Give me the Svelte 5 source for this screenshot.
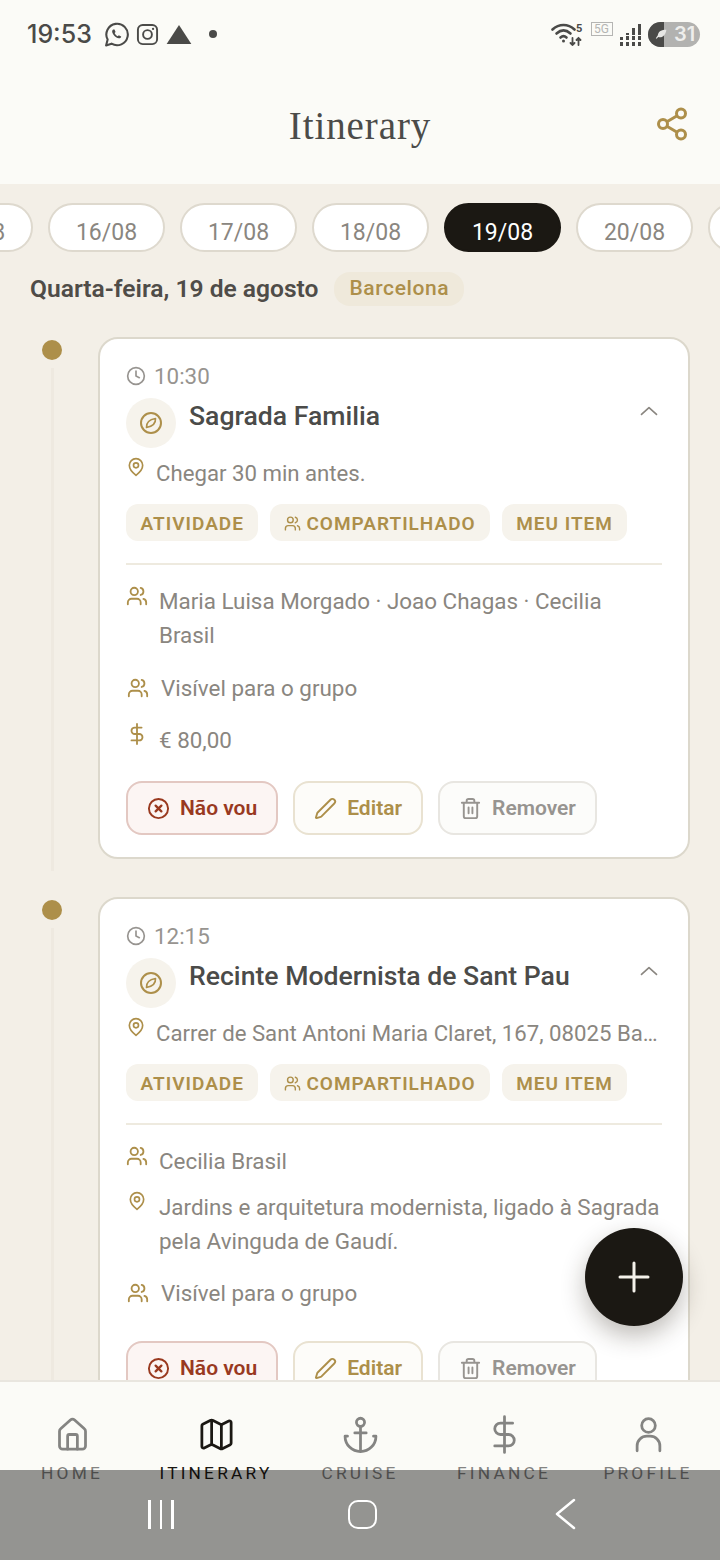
<script>
  const dates = ['15/08', '16/08', '17/08', '18/08', '19/08', '20/08', '21/08']
  const activeDate = '19/08'

  const events = [
    {
      time: '10:30',
      title: 'Sagrada Familia',
      place: 'Chegar 30 min antes.',
      people: 'Maria Luisa Morgado · Joao Chagas · Cecilia Brasil',
      price: '€ 80,00'
    },
    {
      time: '12:15',
      title: 'Recinte Modernista de Sant Pau',
      place: 'Carrer de Sant Antoni Maria Claret, 167, 08025 Barcelona',
      people: 'Cecilia Brasil',
      note: 'Jardins e arquitetura modernista, ligado à Sagrada pela Avinguda de Gaudí.'
    }
  ]

  const tabs = ['HOME', 'ITINERARY', 'CRUISE', 'FINANCE', 'PROFILE']
</script>

{#snippet users()}
  <path d="M16 21v-2a4 4 0 0 0-4-4H6a4 4 0 0 0-4 4v2" />
  <circle cx="9" cy="7" r="4" />
  <path d="M22 21v-2a4 4 0 0 0-3-3.87" />
  <path d="M16 3.13a4 4 0 0 1 0 7.75" />
{/snippet}

{#snippet pin()}
  <path d="M20 10c0 6-8 12-8 12s-8-6-8-12a8 8 0 0 1 16 0Z" />
  <circle cx="12" cy="10" r="3" />
{/snippet}

<div class="screen">
  <header class="top">
    <div class="status">
      <div class="status-left">
        <span class="clock">19:53</span>
        <svg class="st-wa" viewBox="0 0 24 24" fill="none" stroke="currentColor" stroke-width="2">
          <path d="M2 22.5l1.5-5.6A10.3 10.3 0 1 1 7.2 20.8z" stroke-linejoin="round" />
          <path d="M8.7 7.3c-1.3 1-1.2 2.9.4 5 1.6 2.1 3.5 3.4 5.4 3.3 1.1-.1 2-.9 2-1.8l-2.3-1.2-1 1c-1.200-.4-2.500-1.700-3-3l.9-1-1-2.400z" fill="currentColor" stroke="none" />
        </svg>
        <svg class="st-ig" viewBox="0 0 24 24" fill="none" stroke="currentColor" stroke-width="2">
          <rect x="2" y="2" width="20" height="20" rx="5" />
          <circle cx="12" cy="12" r="4.600" />
          <circle cx="17.800" cy="6.200" r="1.200" fill="currentColor" stroke="none" />
        </svg>
        <svg class="st-tri" viewBox="0 0 26 20"><path d="M13 0l13 20H0z" fill="currentColor" /></svg>
        <span class="st-dot"></span>
      </div>
      <div class="status-right">
        <svg class="st-wifi" viewBox="0 0 32 24" fill="none" stroke="currentColor" stroke-width="2.600" stroke-linecap="round">
          <path d="M1.500 7.500C8 1.500 17 1.500 23.500 7.500" />
          <path d="M5.500 11.500C10 7.500 15 7.500 19.500 11.500" />
          <path d="M9.500 15.500c2-1.800 4-1.800 6 0" />
          <circle cx="12.500" cy="19" r="1.500" fill="currentColor" stroke="none" />
          <path d="M21.500 16v7M19.500 21l2 2 2-2M27.500 23v-7M25.500 18l2-2 2 2" stroke-width="1.800" />
          <text x="25" y="9.500" class="st-five">5</text>
        </svg>
        <span class="st-5g">5G</span>
        <span class="signal">
          {#each [9, 13, 18, 22] as h}
            <i style="height: {h}px"></i>
          {/each}
        </span>
        <span class="battery">
          <span class="batt-cap">
            <svg viewBox="0 0 16 16" fill="#e6e6e4"><path d="M14 2C8 2 4 4 3.500 9L1 12.500l1 .7L4 11c5 1.500 9-2 10-9z" /></svg>
          </span>
          <span class="batt-num">31</span>
        </span>
      </div>
    </div>
    <div class="titlebar">
      <span></span>
      <h1>Itinerary</h1>
      <svg class="share" viewBox="0 0 24 24" fill="none" stroke="currentColor" stroke-width="2">
        <circle cx="18" cy="5" r="3" />
        <circle cx="6" cy="12" r="3" />
        <circle cx="18" cy="19" r="3" />
        <path d="M8.600 13.500l6.800 4M15.400 6.500l-6.800 4" />
      </svg>
    </div>
  </header>

  <main class="content">
    <div class="chips">
      {#each dates as d}
        <div class="chip" class:active={d === activeDate}><span>{d}</span></div>
      {/each}
    </div>

    <div class="dayline">
      <h2>Quarta-feira, 19 de agosto</h2>
      <span class="city">Barcelona</span>
    </div>

    <div class="timeline">
      {#each events as ev}
        <section class="item">
          <div class="rail">
            <span class="dot"></span>
            <span class="line"></span>
          </div>
          <article class="card">
            <div class="time">
              <svg viewBox="0 0 24 24" fill="none" stroke="currentColor" stroke-width="2" stroke-linecap="round" stroke-linejoin="round">
                <circle cx="12" cy="12" r="10" />
                <path d="M12 6v6l4 2" />
              </svg>
              {ev.time}
            </div>

            <div class="head">
              <span class="kind">
                <svg viewBox="0 0 24 24" fill="none" stroke="currentColor" stroke-width="2" stroke-linejoin="round">
                  <circle cx="12" cy="12" r="10" />
                  <path d="M16.500 7.500c.3 4-2.500 7.800-9 9-.3-4 2.500-7.800 9-9z" stroke-width="1.600" />
                </svg>
              </span>
              <h3>{ev.title}</h3>
              <svg class="chev" viewBox="0 0 24 24" fill="none" stroke="currentColor" stroke-width="2" stroke-linecap="round" stroke-linejoin="round">
                <path d="M3 16l9-8 9 8" />
              </svg>
            </div>

            <div class="place">
              <svg viewBox="0 0 24 24" fill="none" stroke="currentColor" stroke-width="2" stroke-linejoin="round">
                {@render pin()}
              </svg>
              <span>{ev.place}</span>
            </div>

            <div class="tags">
              <span class="tag">ATIVIDADE</span>
              <span class="tag">
                <svg viewBox="0 0 24 24" fill="none" stroke="currentColor" stroke-width="2" stroke-linecap="round">
                  {@render users()}
                </svg>
                COMPARTILHADO
              </span>
              <span class="tag">MEU ITEM</span>
            </div>

            <hr />

            <div class="row">
              <svg class="gold" viewBox="0 0 24 24" fill="none" stroke="currentColor" stroke-width="2" stroke-linecap="round">
                {@render users()}
              </svg>
              <p>{ev.people}</p>
            </div>

            {#if ev.note}
              <div class="row note">
                <svg class="gold note-pin" viewBox="0 0 24 24" fill="none" stroke="currentColor" stroke-width="2" stroke-linejoin="round">
                  {@render pin()}
                </svg>
                <p>{ev.note}</p>
              </div>
            {/if}

            <div class="row vis">
              <svg class="gold wide" viewBox="0 0 24 24" fill="none" stroke="currentColor" stroke-width="2" stroke-linecap="round">
                {@render users()}
              </svg>
              <p>Visível para o grupo</p>
            </div>

            {#if ev.price}
              <div class="row price">
                <svg class="gold" viewBox="0 0 24 24" fill="none" stroke="currentColor" stroke-width="2" stroke-linecap="round">
                  <path d="M12 1v22M17 5H9.500a3.500 3.500 0 0 0 0 7h5a3.500 3.500 0 0 1 0 7H6" />
                </svg>
                <p>{ev.price}</p>
              </div>
            {/if}

            <div class="actions">
              <button class="btn no">
                <svg viewBox="0 0 24 24" fill="none" stroke="currentColor" stroke-width="2" stroke-linecap="round">
                  <circle cx="12" cy="12" r="10" />
                  <path d="M15 9l-6 6M9 9l6 6" stroke-width="2.400" />
                </svg>
                Não vou
              </button>
              <button class="btn edit">
                <svg viewBox="0 0 24 24" fill="none" stroke="currentColor" stroke-width="2" stroke-linecap="round" stroke-linejoin="round">
                  <path d="M21.174 6.812a1 1 0 0 0-3.986-3.987L3.842 16.174a2 2 0 0 0-.5.83l-1.321 4.352a.5.5 0 0 0 .623.622l4.353-1.32a2 2 0 0 0 .83-.497z" />
                </svg>
                Editar
              </button>
              <button class="btn del">
                <svg viewBox="0 0 24 24" fill="none" stroke="currentColor" stroke-width="2" stroke-linecap="round" stroke-linejoin="round">
                  <path d="M3 6h18M19 6v14a2 2 0 0 1-2 2H7a2 2 0 0 1-2-2V6M8 6V4a2 2 0 0 1 2-2h4a2 2 0 0 1 2 2v2M10 11v6M14 11v6" />
                </svg>
                Remover
              </button>
            </div>
          </article>
        </section>
      {/each}
    </div>
  </main>

  <nav class="tabs">
    {#each tabs as tab}
      <div class="tab" class:current={tab === 'ITINERARY'}>
        <svg viewBox="0 0 24 24" fill="none" stroke="currentColor" stroke-width="1.700" stroke-linecap="round" stroke-linejoin="round">
          {#if tab === 'HOME'}
            <path d="M4 10a2 2 0 0 1 .7-1.500l6-5.400a2 2 0 0 1 2.600 0l6 5.400A2 2 0 0 1 20 10v9a2 2 0 0 1-2 2H6a2 2 0 0 1-2-2z" />
            <path d="M15 21v-8a1 1 0 0 0-1-1h-4a1 1 0 0 0-1 1v8" />
          {:else if tab === 'ITINERARY'}
            <path d="M14.106 5.553a2 2 0 0 0 1.788 0l3.659-1.83A1 1 0 0 1 21 4.619v12.764a1 1 0 0 1-.553.894l-4.553 2.277a2 2 0 0 1-1.788 0l-4.212-2.106a2 2 0 0 0-1.788 0l-3.659 1.83A1 1 0 0 1 3 19.381V6.618a1 1 0 0 1 .553-.894l4.553-2.277a2 2 0 0 1 1.788 0z" />
            <path d="M15 5.764v15M9 3.236v15" />
          {:else if tab === 'CRUISE'}
            <circle cx="12" cy="4.500" r="2.500" />
            <path d="M12 22V7M8.500 11h7M4 13H2.500a9.500 9.500 0 0 0 19 0H20" />
          {:else if tab === 'FINANCE'}
            <path d="M12 1v22M17 5H9.500a3.500 3.500 0 0 0 0 7h5a3.500 3.500 0 0 1 0 7H6" />
          {:else}
            <circle cx="12" cy="6.500" r="4.200" />
            <path d="M5 22v-3a6 6 0 0 1 6-6h2a6 6 0 0 1 6 6v3" />
          {/if}
        </svg>
        <span>{tab}</span>
      </div>
    {/each}
  </nav>

  <button class="fab" aria-label="Adicionar">
    <svg viewBox="0 0 32 32" fill="none" stroke="#f4f1ea" stroke-width="3" stroke-linecap="round">
      <path d="M16 2v28M2 16h28" />
    </svg>
  </button>

  <div class="sysnav">
    <span class="bars"><i></i><i></i><i></i></span>
    <span class="homebtn"></span>
    <svg class="back" viewBox="0 0 22 32" fill="none" stroke="#fff" stroke-width="2.500" stroke-linecap="round" stroke-linejoin="round">
      <path d="M20 2L3 16l17 14" />
    </svg>
  </div>
</div>

<style>
  :global(body) {
    margin: 0;
  }

  .screen {
    position: relative;
    width: 720px;
    height: 1560px;
    overflow: hidden;
    display: flex;
    flex-direction: column;
    background: #f3efe7;
    font-family: Roboto, sans-serif;
    color: #8a8680;
  }

  .top {
    flex: none;
    height: 184px;
    background: #fbfbf7;
  }

  .status {
    height: 68px;
    padding: 0 20px 0 27px;
    display: flex;
    align-items: center;
    justify-content: space-between;
    color: #4a4a48;
  }

  .status-left,
  .status-right {
    display: flex;
    align-items: center;
  }

  .clock {
    font-family: Inter, sans-serif;
    font-size: 25px;
    font-weight: 500;
    margin-right: 12px;
  }

  .st-wa {
    width: 25px;
    height: 25px;
    margin-right: 7px;
  }

  .st-ig {
    width: 23px;
    height: 23px;
    margin-right: 7px;
  }

  .st-tri {
    width: 26px;
    height: 19px;
    margin-right: 17px;
  }

  .st-dot {
    width: 8px;
    height: 8px;
    border-radius: 50%;
    background: currentColor;
  }

  .st-wifi {
    width: 32px;
    height: 24px;
    margin-right: 8px;
  }

  .st-five {
    font-family: Roboto, sans-serif;
    font-size: 11px;
    font-weight: 700;
    fill: currentColor;
    stroke: none;
  }

  .st-5g {
    width: 20px;
    height: 12px;
    margin: -10px 7px 0 0;
    border: 1px solid #b5b5b3;
    font-size: 12px;
    line-height: 12px;
    text-align: center;
    color: #b5b5b3;
  }

  .signal {
    display: flex;
    align-items: flex-end;
    gap: 2.500px;
    margin-right: 7px;
    height: 23px;
  }

  .signal i {
    width: 3.500px;
    background: linear-gradient(to top, currentColor 0 4px, transparent 4px 6px, currentColor 6px 10px, transparent 10px 11px, currentColor 11px);
  }

  .battery {
    position: relative;
    width: 52px;
    height: 25px;
    border-radius: 13px;
    overflow: hidden;
    display: flex;
    background: #b2b2b0;
  }

  .batt-cap {
    flex: none;
    width: 16px;
    background: #4a4a48;
  }

  .batt-cap svg {
    position: absolute;
    left: 7px;
    top: 6px;
    width: 13px;
    height: 13px;
  }

  .batt-num {
    flex: 1;
    text-align: center;
    font-family: Inter, sans-serif;
    font-size: 20px;
    font-weight: 600;
    line-height: 25px;
    color: #eeeeec;
    padding-left: 5px;
  }

  .titlebar {
    display: grid;
    grid-template-columns: 1fr auto 1fr;
    align-items: center;
    height: 116px;
    margin-top: -2px;
  }

  h1 {
    margin: 0;
    padding-top: 2px;
    font-family: 'Liberation Serif', serif;
    font-size: 39px;
    font-weight: 400;
    letter-spacing: 0.900px;
    color: #4b4b49;
  }

  .share {
    justify-self: end;
    width: 36px;
    height: 38px;
    margin-right: 30px;
    color: #ad8f4a;
  }

  .content {
    flex: 1;
    min-height: 0;
    overflow: hidden;
  }

  .chips {
    display: flex;
    gap: 15px;
    margin: 19px 0 0 -84px;
  }

  .chip {
    flex: none;
    box-sizing: border-box;
    width: 117px;
    height: 49px;
    border-radius: 25px;
    border: 2px solid #ded9ce;
    background: #fff;
    font-size: 23px;
    color: #8a8680;
    text-align: center;
    line-height: 55px;
  }

  .chip.active {
    background: #1b1813;
    border-color: #1b1813;
    color: #fff;
  }

  .dayline {
    display: flex;
    align-items: center;
    gap: 16px;
    margin: 20px 30px 0;
    height: 34px;
  }

  h2 {
    margin: 0;
    padding-bottom: 2px;
    font-size: 24.600px;
    font-weight: 600;
    color: #4f4c48;
  }

  .city {
    height: 34px;
    padding: 0 15px;
    border-radius: 16px;
    background: #efe9db;
    color: #ad8f4a;
    font-size: 21px;
    font-weight: 500;
    letter-spacing: 0.600px;
    line-height: 33px;
  }

  .timeline {
    margin-top: 31px;
    padding: 0 30px 0 42px;
    display: flex;
    flex-direction: column;
    gap: 38px;
  }

  .item {
    display: flex;
    gap: 36px;
  }

  .rail {
    flex: none;
    width: 20px;
    display: flex;
    flex-direction: column;
    align-items: center;
    margin-bottom: -12px;
  }

  .dot {
    flex: none;
    width: 20px;
    height: 20px;
    margin-top: 3px;
    border-radius: 50%;
    background: #ad8f4a;
  }

  .line {
    flex: 1;
    width: 3px;
    margin-top: 8px;
    background: #eee9e0;
  }

  .card {
    box-sizing: border-box;
    width: 592px;
    padding: 24px 26px 22px;
    background: #fff;
    border: 2px solid #dcd8cc;
    border-radius: 20px;
  }

  .time {
    display: flex;
    align-items: center;
    gap: 8px;
    height: 26px;
    font-size: 22.400px;
    color: #979490;
  }

  .time svg {
    width: 20px;
    height: 20px;
  }

  .head {
    display: flex;
    align-items: flex-start;
    margin-top: 9px;
    height: 50px;
  }

  .kind {
    flex: none;
    width: 50px;
    height: 50px;
    border-radius: 50%;
    background: #f6f3ec;
    color: #ad8f4a;
    display: flex;
    align-items: center;
    justify-content: center;
  }

  .kind svg {
    width: 24px;
    height: 24px;
  }

  h3 {
    flex: 1;
    margin: 0 0 0 13px;
    font-size: 26.600px;
    font-weight: 500;
    line-height: 36px;
    color: #4b4b49;
  }

  .chev {
    flex: none;
    width: 20px;
    height: 20px;
    margin: 3px 3px 0 0;
    color: #8a8680;
  }

  .place {
    display: flex;
    align-items: flex-start;
    gap: 10px;
    margin-top: 8px;
    height: 34px;
    font-size: 22.200px;
    line-height: 34px;
  }

  .place svg {
    flex: none;
    width: 20px;
    height: 20px;
    margin-top: 1px;
    color: #ad8f4a;
  }

  .place span {
    min-width: 0;
    overflow: hidden;
    white-space: nowrap;
    text-overflow: ellipsis;
  }

  .tags {
    display: flex;
    gap: 11.500px;
    margin-top: 14px;
  }

  .tag {
    display: flex;
    align-items: center;
    gap: 5px;
    height: 37px;
    padding: 1px 14.500px 0;
    box-sizing: border-box;
    border-radius: 12px;
    background: #f6f3ec;
    color: #ad8f4a;
    font-size: 19px;
    font-weight: 600;
    letter-spacing: 1px;
  }

  .tag svg {
    width: 17px;
    height: 17px;
  }

  hr {
    height: 2px;
    margin: 22px 0 19px;
    border: 0;
    background: #eeeadf;
  }

  .row {
    display: flex;
    align-items: flex-start;
    gap: 11px;
    margin-top: 12px;
    font-size: 22.400px;
    line-height: 34px;
  }

  hr + .row {
    margin-top: 0;
  }

  .row p {
    margin: 0;
    max-width: 502px;
  }

  .note {
    margin-bottom: -1px;
  }

  .gold {
    flex: none;
    width: 22px;
    height: 22px;
    margin-top: 1px;
    color: #ad8f4a;
  }

  .note-pin {
    width: 20px;
    height: 20px;
    margin: 1px 1px 0 1px;
  }

  .wide {
    width: 24px;
    margin-top: 6px;
  }

  .vis {
    margin-top: 19px;
    padding-bottom: 7px;
  }

  .vis + .price {
    margin-top: 11px;
  }

  .price .gold {
    margin-top: 0;
  }

  .actions {
    display: flex;
    gap: 15px;
    margin-top: 24px;
  }

  .btn {
    box-sizing: border-box;
    display: flex;
    align-items: center;
    gap: 10px;
    height: 54px;
    padding: 0 19px;
    border-radius: 16px;
    border: 2px solid #e9e5da;
    font-family: Roboto, sans-serif;
    font-size: 21px;
    font-weight: 600;
    background: #fdfcf9;
  }

  .btn svg {
    width: 23px;
    height: 23px;
  }

  .no {
    border-color: #e3c8c2;
    background: #fcf5f3;
    color: #99391f;
  }

  .edit {
    color: #ad8f4a;
    border-color: #e9e2d1;
  }

  .del {
    color: #979490;
    border-color: #e8e6e1;
    background: #fcfcfa;
  }

  .tabs {
    flex: none;
    height: 180px;
    box-sizing: border-box;
    border-top: 2px solid #e9e6df;
    background: #fbfbf7;
    display: grid;
    grid-template-columns: repeat(5, 144px);
    padding-top: 33px;
  }

  .tab {
    display: flex;
    flex-direction: column;
    align-items: center;
    color: #848482;
  }

  .tab svg {
    width: 39px;
    height: 39px;
  }

  .tab span {
    margin-top: 9px;
    font-size: 17.300px;
    letter-spacing: 3.200px;
    line-height: 20px;
  }

  .tab.current {
    color: #1b1813;
  }

  .fab {
    position: absolute;
    left: 585px;
    top: 1228px;
    width: 98px;
    height: 98px;
    padding: 0;
    border: 0;
    border-radius: 50%;
    background: #1b1813;
    box-shadow: 0 10px 24px rgba(40, 30, 15, 0.3);
    display: flex;
    align-items: center;
    justify-content: center;
  }

  .fab svg {
    width: 32px;
    height: 32px;
  }

  .sysnav {
    position: absolute;
    left: 0;
    right: 0;
    bottom: 0;
    height: 90px;
    background: rgba(0, 0, 0, 0.41);
  }

  .bars {
    position: absolute;
    left: 148px;
    top: 30px;
    display: flex;
    gap: 9px;
  }

  .bars i {
    width: 2.500px;
    height: 29px;
    background: #fff;
  }

  .homebtn {
    position: absolute;
    left: 348px;
    top: 30px;
    box-sizing: border-box;
    width: 29px;
    height: 29px;
    border: 2.500px solid #fff;
    border-radius: 10px;
  }

  .back {
    position: absolute;
    left: 554px;
    top: 28px;
    width: 22px;
    height: 32px;
  }
</style>
